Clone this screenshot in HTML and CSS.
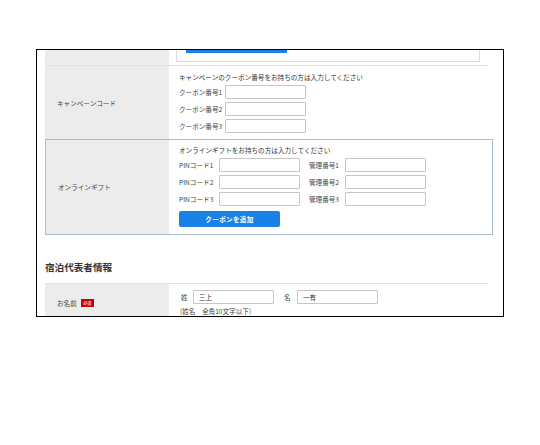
FILE: index.html
```html
<!DOCTYPE html>
<html lang="ja">
<head>
<meta charset="utf-8">
<title>予約フォーム</title>
<link rel="stylesheet" href="styles.css">
</head>
<body>
<div class="frame">
  <div class="row row-top">
    <div class="label"></div>
    <div class="cell">
      <div class="topbox"><div class="topbtn"></div></div>
    </div>
  </div>

  <div class="row row-campaign">
    <div class="label">キャンペーンコード</div>
    <div class="cell">
      <p class="note">キャンペーンのクーポン番号をお持ちの方は入力してください</p>
      <div class="field"><span class="flabel fl-coupon">クーポン番号1</span><span class="input"></span></div>
      <div class="field"><span class="flabel fl-coupon">クーポン番号2</span><span class="input"></span></div>
      <div class="field"><span class="flabel fl-coupon">クーポン番号3</span><span class="input"></span></div>
    </div>
  </div>

  <div class="row row-gift">
    <div class="label">オンラインギフト</div>
    <div class="cell">
      <p class="note">オンラインギフトをお持ちの方は入力してください</p>
      <div class="field">
        <span class="flabel fl-pin">PINコード1</span><span class="input"></span>
        <span class="flabel fl-kanri">管理番号1</span><span class="input"></span>
      </div>
      <div class="field">
        <span class="flabel fl-pin">PINコード2</span><span class="input"></span>
        <span class="flabel fl-kanri">管理番号2</span><span class="input"></span>
      </div>
      <div class="field">
        <span class="flabel fl-pin">PINコード3</span><span class="input"></span>
        <span class="flabel fl-kanri">管理番号3</span><span class="input"></span>
      </div>
      <button class="btn" type="button">クーポンを追加</button>
    </div>
  </div>

  <h2 class="heading">宿泊代表者情報</h2>

  <div class="row row-name">
    <div class="label">お名前<span class="badge">必須</span></div>
    <div class="cell">
      <div class="field">
        <span class="flabel fl-sei">姓</span><span class="input">三上</span>
        <span class="flabel fl-mei">名</span><span class="input">一有</span>
      </div>
      <p class="hint">(姓名　全角10文字以下)</p>
    </div>
  </div>
</div>
</body>
</html>
```

FILE: styles.css
```css
* { box-sizing: border-box; }

html, body {
  margin: 0;
  padding: 0;
  background: #fff;
}

body {
  font-family: "Noto Sans CJK JP", "Noto Sans", sans-serif;
  color: #333;
  font-size: 6.6px;
  line-height: 10px;
}

.frame {
  margin: 49px 0 0 36px;
  width: 468px;
  height: 268px;
  border: 1px solid #000;
  padding-left: 8px;
  overflow: hidden;
  background: #fff;
}

.row {
  display: grid;
  grid-template-columns: 124px 1fr;
  width: 443px;
}

.label {
  background: #ececec;
  display: flex;
  align-items: center;
  padding-left: 12px;
  color: #444;
}

.cell {
  padding-left: 10px;
}

.row-top {
  height: 16px;
  border-bottom: 1px solid #e2e2e2;
}

.row-top .cell { padding-left: 7px; }

.topbox {
  width: 304px;
  height: 12px;
  border: 1px solid #dcdcdc;
  border-top: none;
  padding-left: 9px;
}

.topbtn {
  width: 101px;
  height: 3px;
  background: #1a82e6;
}

.row-campaign .cell {
  padding-top: 6px;
  padding-bottom: 6px;
}

.note {
  margin: 0 0 1px;
  color: #333;
}

.field {
  display: flex;
  align-items: center;
  height: 14px;
  margin-top: 3px;
}

.flabel {
  flex: none;
  color: #444;
}

.fl-coupon { width: 46px; }
.fl-pin { width: 40px; }
.fl-kanri { width: 36px; margin-left: 9px; }
.fl-sei { width: 14px; padding-left: 2px; }
.fl-mei { width: 13px; margin-left: 10px; padding-left: 0; }

.input {
  flex: none;
  display: block;
  width: 81px;
  height: 14px;
  border: 1px solid #c6c6c6;
  border-radius: 1px;
  background: #fff;
  padding-left: 5px;
  line-height: 12px;
  color: #333;
}

.row-gift {
  width: 448px;
  border: 1px solid #a9bdd2;
  grid-template-columns: 123px 1fr;
}

.row-gift .cell {
  padding-top: 5px;
  padding-bottom: 7px;
}

.btn {
  display: block;
  margin-top: 5px;
  width: 101px;
  height: 16px;
  border: none;
  border-radius: 2px;
  background: #1a82e6;
  color: #fff;
  font-family: inherit;
  font-size: 6.6px;
  font-weight: bold;
  line-height: 16px;
  padding: 0;
  letter-spacing: 0.3px;
}

.heading {
  margin: 25px 0 9px;
  font-size: 9.6px;
  line-height: 14px;
  font-weight: bold;
  color: #333;
}

.row-name {
  border-top: 1px solid #e2e2e2;
}

.row-name .cell {
  padding-top: 6px;
  padding-bottom: 6px;
}

.row-name .field { margin-top: 0; }

.badge {
  display: inline-block;
  margin-left: 4px;
  width: 13px;
  height: 8px;
  background: #c8000a;
  color: #fff;
  font-size: 4px;
  line-height: 8px;
  text-align: center;
}

.hint {
  margin: 2px 0 0;
  padding-left: 1px;
  color: #444;
}
```
